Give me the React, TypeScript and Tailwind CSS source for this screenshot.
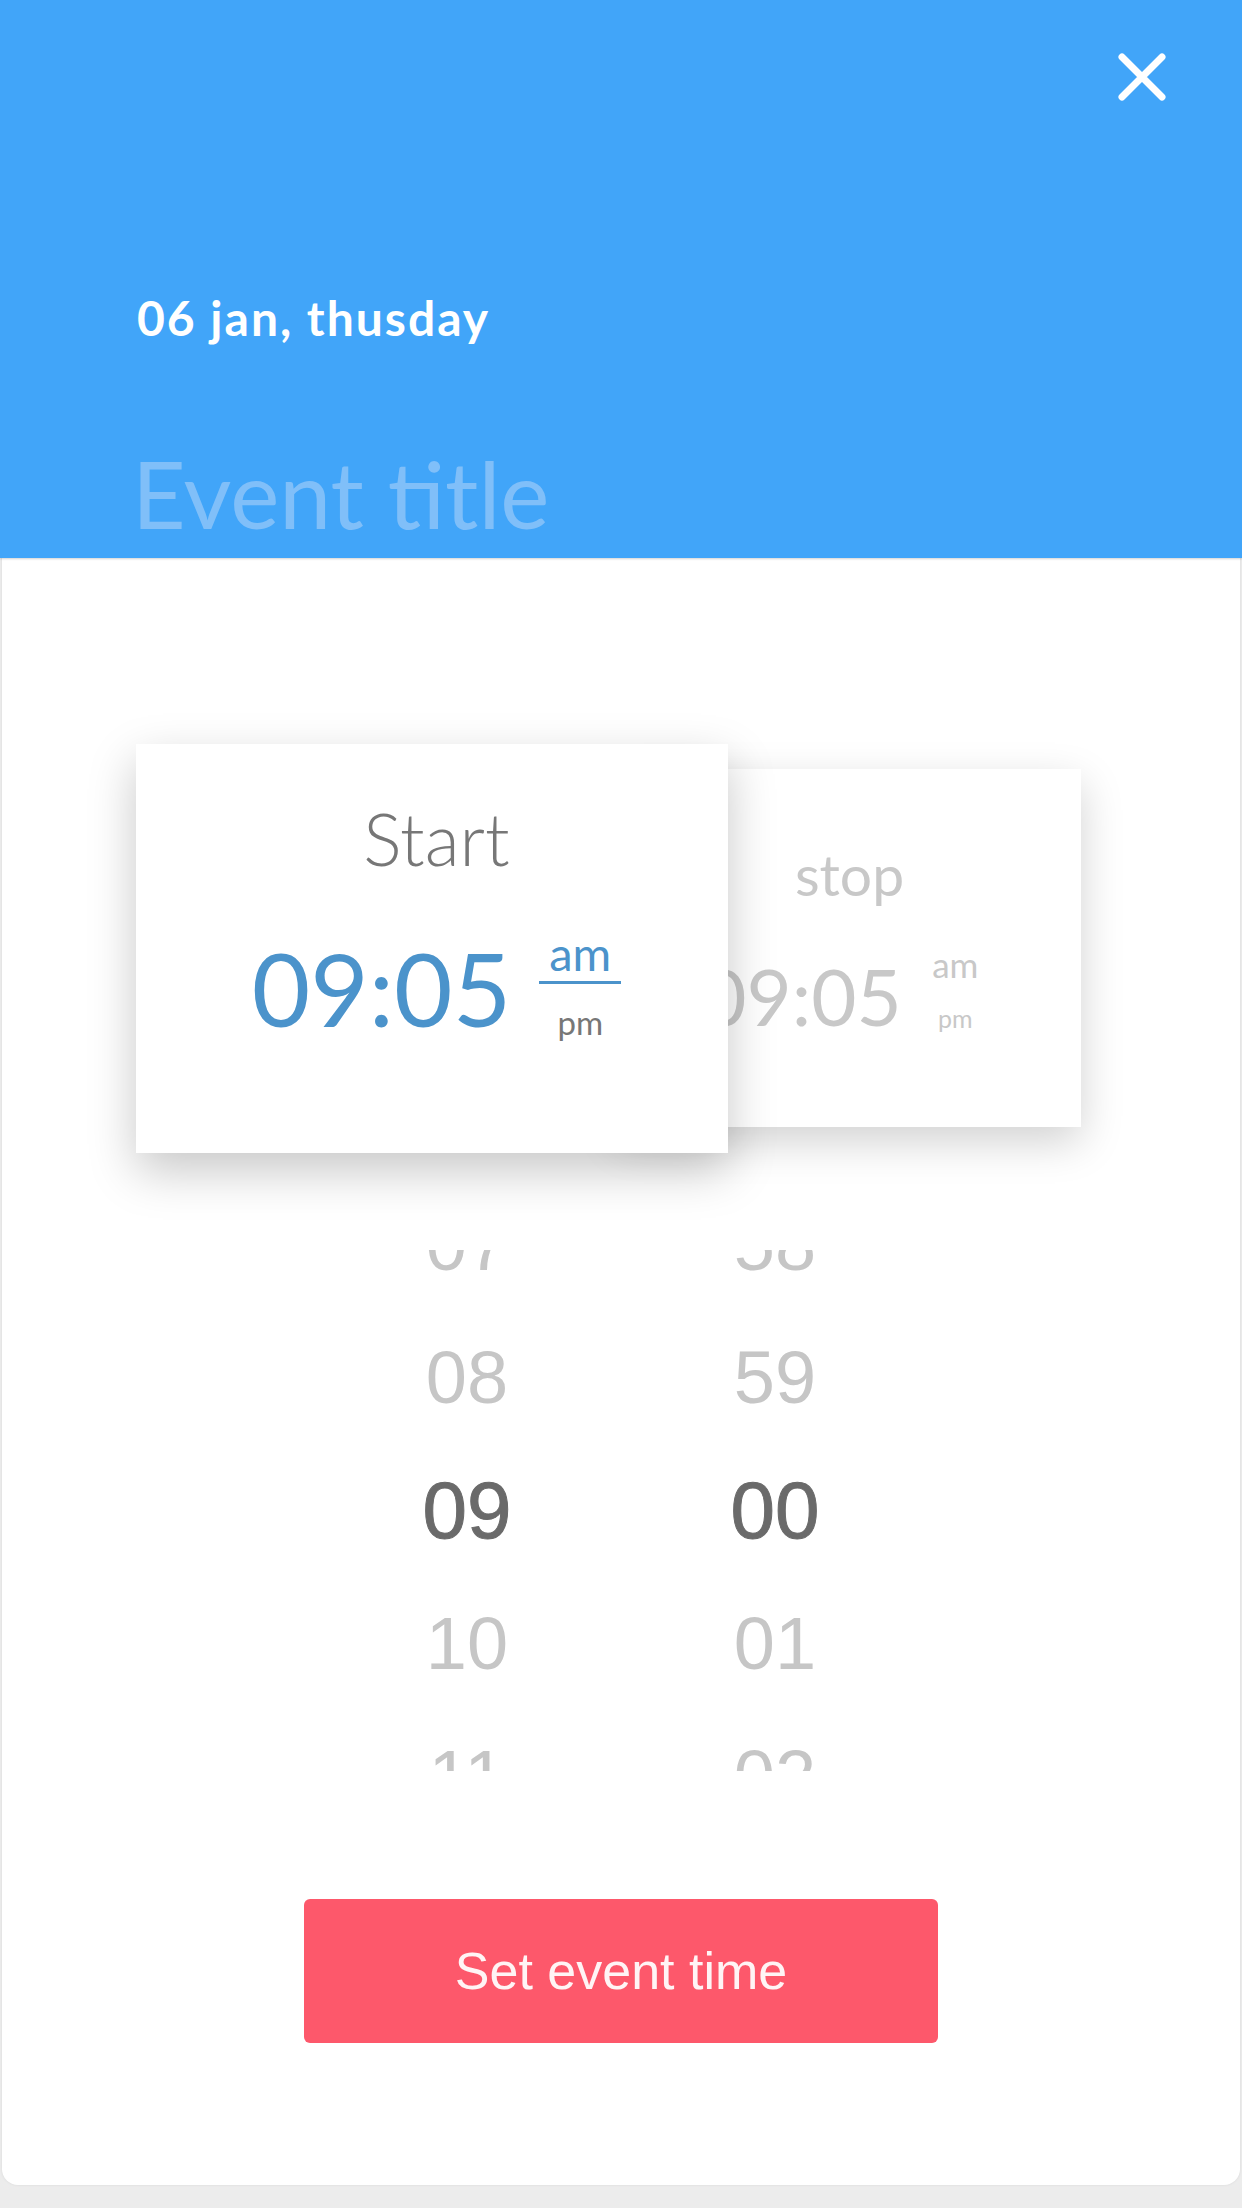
import React from "react";

const lato = { fontFamily: '"Lato", "Open Sans", sans-serif' };

function CloseIcon() {
  return (
    <svg width="50" height="50" viewBox="0 0 50 50" fill="none">
      <path d="M5 5 L45 45 M45 5 L5 45" stroke="white" strokeWidth="7" strokeLinecap="round" />
    </svg>
  );
}

const hours = ["07", "08", "09", "10", "11"];
const mins = ["58", "59", "00", "01", "02"];

function PickerColumn({ items }: { items: string[] }) {
  return (
    <div className="flex w-[200px] shrink-0 flex-col -mt-[72px]">
      {items.map((v, i) => (
        <div
          key={v + i}
          className={
            i === 2
              ? "flex h-[133px] shrink-0 items-center justify-center text-[80px] leading-none text-[#6a6a6a] [-webkit-text-stroke:1px_#6a6a6a]"
              : "flex h-[133px] shrink-0 items-center justify-center text-[74px] leading-none text-[#c6c6c6]"
          }
        >
          {v}
        </div>
      ))}
    </div>
  );
}

export default function App() {
  return (
    <div className="min-h-[2208px] w-full bg-[#ececec]" style={lato}>
      <header className="relative z-10 flex h-[558px] flex-col bg-[#41a5f9] shadow-[0_1px_2px_rgba(0,0,0,0.18)]">
        <div className="flex justify-end pr-[75px] pt-[52px]">
          <CloseIcon />
        </div>
        <div className="mt-[192px] pl-[137px] text-[48px] font-bold leading-none tracking-[2px] text-white">
          06 jan, thusday
        </div>
        <div className="mt-[105px] pl-[132px] text-[93px] font-normal leading-none text-[#80bff9]">
          Event title
        </div>
      </header>

      <main className="mx-[2px] flex h-[1627px] flex-col rounded-b-[16px] bg-white shadow-[0_0_3px_rgba(0,0,0,0.08)]">
        <section className="mt-[186px] flex items-start">
          <div className="relative z-10 ml-[134px] flex h-[409px] w-[592px] flex-col items-center bg-white pl-[9px] shadow-[0_18px_45px_rgba(0,0,0,0.22)]">
            <div className="mt-[58px] text-[72px] font-light leading-none text-[#777777]">Start</div>
            <div className="mt-[56px] flex items-start">
              <div className="mt-[8px] text-[101px] font-normal leading-none text-[#4b93cb]">09:05</div>
              <div className="ml-[28px] flex w-[82px] flex-col items-center">
                <div className="w-full border-b-[3px] border-[#4b93cb] pb-[4px] text-center text-[47px] font-normal leading-none text-[#4b93cb]">
                  am
                </div>
                <div className="mt-[22px] text-[33px] font-normal leading-none text-[#777777]">pm</div>
              </div>
            </div>
          </div>

          <div className="relative z-0 -ml-[110px] mt-[25px] flex h-[358px] w-[463px] flex-col items-center bg-white shadow-[0_15px_40px_rgba(0,0,0,0.18)]">
            <div className="mt-[77px] text-[57px] font-normal leading-none text-[#c8c8c8]">stop</div>
            <div className="mt-[48px] flex items-start pr-[19px]">
              <div className="mt-[6px] text-[78px] font-normal leading-none text-[#c8c8c8]">09:05</div>
              <div className="ml-[30px] -mt-[4px] flex w-[47px] flex-col items-center">
                <div className="text-[35px] font-normal leading-none text-[#c8c8c8]">am</div>
                <div className="mt-[24px] text-[25px] font-normal leading-none text-[#c8c8c8]">pm</div>
              </div>
            </div>
          </div>
        </section>

        <section
          className="mt-[97px] flex h-[521px] shrink-0 items-start justify-center gap-[108px] overflow-hidden"
          style={{ fontFamily: '"Liberation Sans", Arial, sans-serif' }}
        >
          <PickerColumn items={hours} />
          <PickerColumn items={mins} />
        </section>

        <div className="mt-[128px] flex justify-center">
          <button
            className="flex h-[144px] w-[634px] items-center justify-center rounded-[6px] bg-[#fd586b] text-[52px] leading-none text-[#fff4f5]"
            style={{ fontFamily: '"Liberation Sans", Arial, sans-serif' }}
          >
            Set event time
          </button>
        </div>
      </main>
    </div>
  );
}
